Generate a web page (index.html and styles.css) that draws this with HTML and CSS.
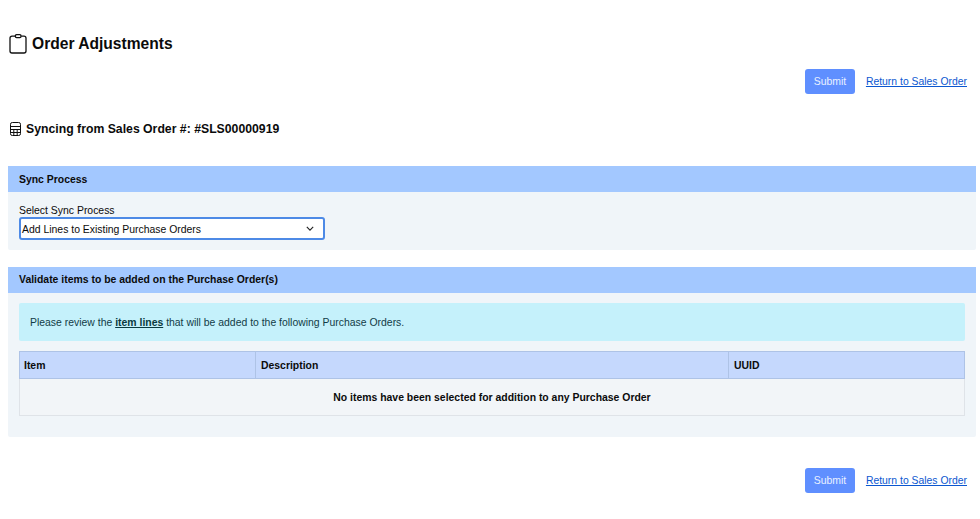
FILE: index.html
```html
<!DOCTYPE html>
<html lang="en">
<head>
<meta charset="utf-8">
<title>Order Adjustments</title>
<link rel="stylesheet" href="styles.css">
</head>
<body>
<h1 class="title">
  <svg class="title-icon" viewBox="0 0 18 20" width="18" height="20" fill="none" stroke="#111" stroke-width="1.3"><path d="M6.2 2.2H3Q1 2.2 1 4.2V17Q1 19 3 19H15Q17 19 17 17V4.2Q17 2.2 15 2.2H12.2"/><rect x="6.4" y="0.7" width="5.6" height="3" rx="1.1"/></svg>
  Order Adjustments
</h1>
<div class="actions actions-top">
  <button class="btn" type="button">Submit</button>
  <a class="link" href="#">Return to Sales Order</a>
</div>
<h2 class="sync">
  <svg class="sync-icon" viewBox="0 0 11 14" width="11" height="14" fill="none" stroke="#111" stroke-width="1"><rect x="0.5" y="0.5" width="10" height="13" rx="1.8"/><path d="M0.5 4.5H10.5M0.5 7.5H10.5M0.5 10.5H10.5M3.8 7.5V13.5M7.2 7.5V13.5"/></svg>
  Syncing from Sales Order #: #SLS00000919
</h2>
<section class="panel panel-sync">
  <div class="panel-head">Sync Process</div>
  <div class="panel-body">
    <label class="field-label">Select Sync Process</label>
    <div class="select">
      <span>Add Lines to Existing Purchase Orders</span>
      <svg viewBox="0 0 10 6" width="8" height="5" fill="none" stroke="#222" stroke-width="1.4"><path d="M1 1L5 5L9 1"/></svg>
    </div>
  </div>
</section>
<section class="panel panel-validate">
  <div class="panel-head">Validate items to be added on the Purchase Order(s)</div>
  <div class="panel-body">
    <div class="alert">Please review the <a class="alert-link" href="#">item lines</a> that will be added to the following Purchase Orders.</div>
    <table class="items">
      <thead>
        <tr><th class="col-item">Item</th><th class="col-desc">Description</th><th>UUID</th></tr>
      </thead>
      <tbody>
        <tr><td colspan="3">No items have been selected for addition to any Purchase Order</td></tr>
      </tbody>
    </table>
  </div>
</section>
<div class="actions actions-bottom">
  <button class="btn" type="button">Submit</button>
  <a class="link" href="#">Return to Sales Order</a>
</div>
</body>
</html>
```

FILE: styles.css
```css
* { box-sizing: border-box; }
html, body { height: 100%; }
body {
  margin: 0;
  padding: 33px 4px 0 8px;
  background: #fff;
  color: #0b0b0b;
  font-family: "Liberation Sans", Arial, sans-serif;
  font-size: 10.43px;
  overflow: hidden;
}
.title {
  display: flex;
  align-items: center;
  gap: 5px;
  margin: 0;
  height: 21px;
  padding-left: 1px;
  font-size: 15.6px;
  font-weight: 700;
}
.actions {
  display: flex;
  justify-content: flex-end;
  align-items: center;
  gap: 11px;
  padding-right: 9px;
}
.actions-top { margin-top: 15px; }
.actions-bottom { margin-top: 31px; }
.btn {
  width: 50px;
  height: 25px;
  border: 0;
  border-radius: 3px;
  background: #5f8fff;
  color: #eaf1ff;
  font: 10.43px "Liberation Sans", Arial, sans-serif;
  padding: 0;
}
.link {
  color: #0b57d0;
  font-size: 10.4px;
  text-decoration: underline;
}
.sync {
  display: flex;
  align-items: center;
  gap: 5px;
  margin: 27px 0 0;
  height: 16px;
  padding-left: 2px;
  font-size: 12.25px;
  font-weight: 700;
}
.panel {
  background: #f0f5f9;
  border-radius: 2px;
}
.panel-sync { margin-top: 29px; height: 84px; }
.panel-validate { margin-top: 17px; height: 170px; }
.panel-head {
  height: 26px;
  padding-left: 11px;
  background: #a3c8ff;
  font-weight: 700;
  line-height: 27px;
}
.panel-validate .panel-head { line-height: 25px; }
.panel-body { padding: 0 11px; }
.panel-sync .panel-body { padding-top: 12px; }
.panel-validate .panel-body { padding-top: 10px; }
.field-label {
  display: block;
  height: 13px;
  line-height: 13px;
}
.select {
  display: flex;
  align-items: center;
  justify-content: space-between;
  width: 306px;
  height: 23px;
  padding: 0 9px 0 1px;
  line-height: 21px;
  background: #fff;
  border: 2px solid #4d8ae6;
  border-radius: 3px;
}
.select span { padding-top: 1px; }
.alert {
  height: 38px;
  padding-left: 11px;
  background: #c5f1fb;
  border-radius: 2px;
  color: #123c47;
  line-height: 39px;
}
.alert-link {
  color: #0a3a3f;
  font-weight: 700;
  text-decoration: underline;
}
.items {
  width: 100%;
  margin-top: 10px;
  border-collapse: collapse;
  table-layout: fixed;
}
.items th {
  height: 27px;
  padding: 0 5px;
  background: #c5d8fd;
  border: 1px solid #aec3e6;
  font-weight: 700;
  text-align: left;
}
.col-item { width: 236px; padding-left: 4px !important; }
.col-desc { width: 473px; }
.items td {
  height: 37px;
  border: 1px solid #dfe3e8;
  background: #f2f5f8;
  font-weight: 700;
  text-align: center;
}
```
